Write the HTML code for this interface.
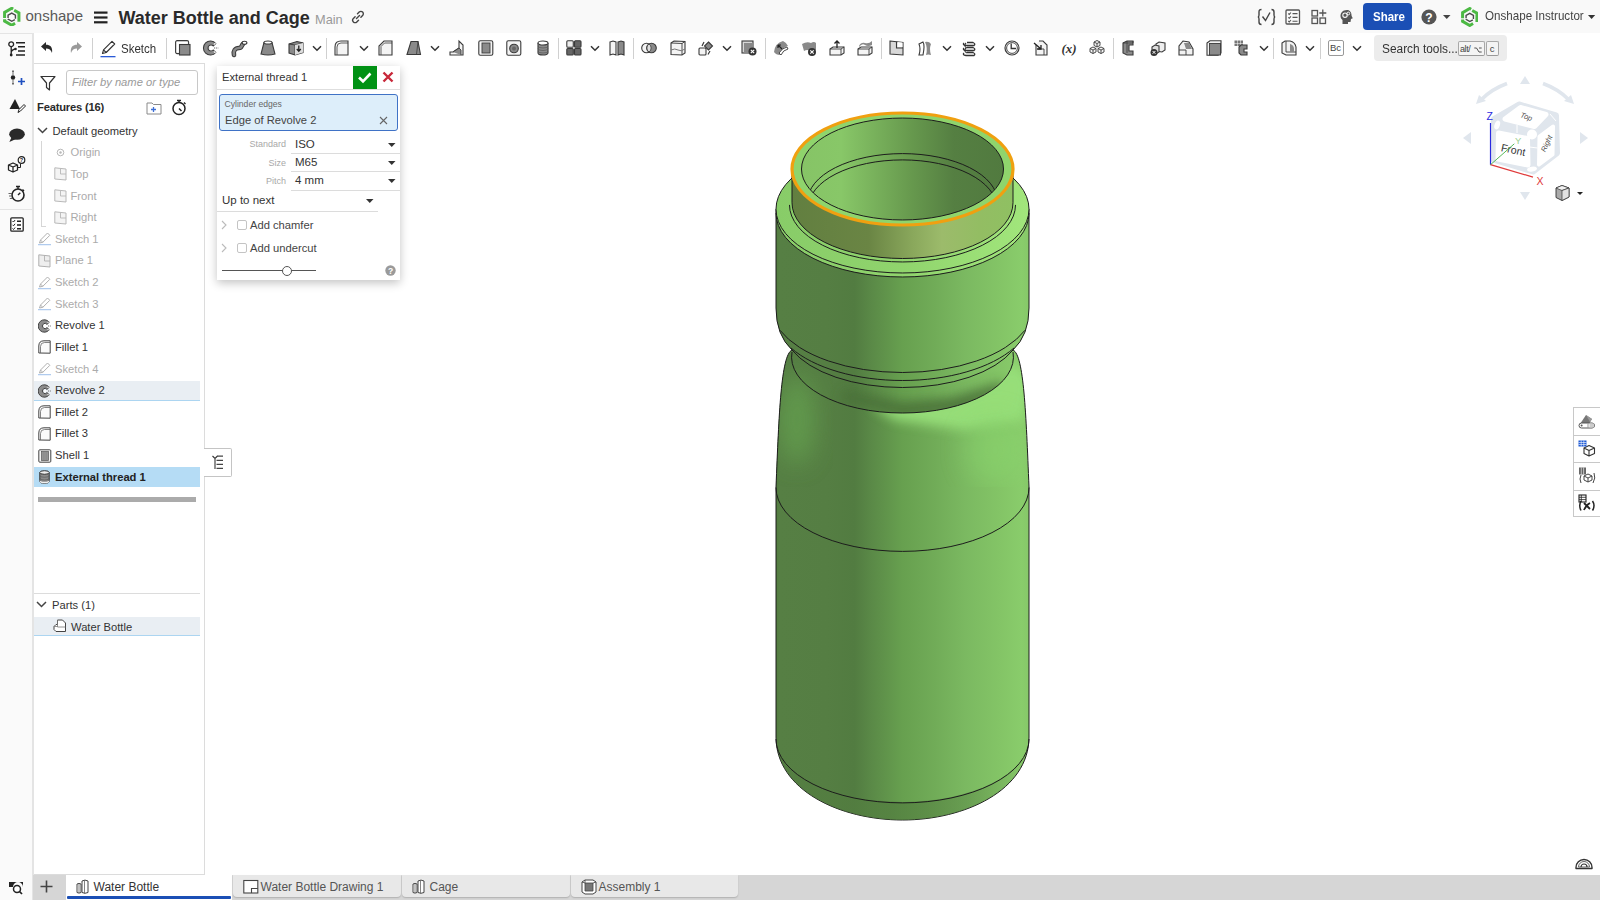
<!DOCTYPE html>
<html><head><meta charset="utf-8">
<style>
*{box-sizing:border-box;margin:0;padding:0}
html,body{width:1600px;height:900px;overflow:hidden;background:#fff;font-family:"Liberation Sans",sans-serif;color:#333}
.a{position:absolute}
#topbar{left:0;top:0;width:1600px;height:33px;background:#f9f9f9}
#leftcol{left:0;top:33px;width:34px;height:867px;background:#fafafa;border-right:2px solid #e4e4e4}
#toolbar{left:34px;top:33px;width:1566px;height:31px;background:#fff}
#panel{left:34px;top:63px;width:171px;height:812px;background:#fff;border-top:1px solid #dcdcdc;border-right:1px solid #dcdcdc;border-bottom:1px solid #dcdcdc}
#tabbar{left:33px;top:875px;width:1567px;height:25px;background:#d6d6d6}
.tab{position:absolute;top:0;height:25px;background:#e8e8e8;border-radius:0 0 5px 5px;font-size:12.5px;color:#555}
.frow{position:absolute;left:0;width:167px;height:21px;font-size:12px;line-height:21px;color:#333}
.frow.dim{color:#aaa}
.frow svg{position:absolute;top:4px;left:5px}
.frow span{position:absolute;left:22px}
</style></head>
<body>
<div id="topbar" class="a"></div>
<!--S:topbar-->
<svg class="a" style="left:3.3px;top:6.6px" width="17.5" height="19.5" viewBox="0 0 20 22">
<path d="M11.6,2.2 L10,1.3 L1.8,6 L1.8,12.4" fill="none" stroke="#4cb944" stroke-width="3.4"/>
<path d="M12.8,3.6 L18.2,6.6 L18.2,16.8" fill="none" stroke="#4cb944" stroke-width="3.4"/>
<path d="M1.8,13.8 L1.8,16 L10,20.7 L13.8,18.5" fill="none" stroke="#4cb944" stroke-width="3.4"/>
<path d="M10,6.8 L14.2,9.2 L14.2,13.8 L10,16.2 L5.8,13.8 L5.8,9.2 Z" fill="none" stroke="#4a4a4a" stroke-width="1.6" stroke-dasharray="9,1.2"/>
</svg>
<div class="a" style="left:25.5px;top:7.90px;font-size:15px;line-height:15px;color:#5a5a5a;white-space:nowrap;">onshape</div>
<svg class="a" style="left:94px;top:11px" width="14" height="13"><rect x="0" y="0.5" width="13.5" height="2.2" fill="#222"/><rect x="0" y="5.4" width="13.5" height="2.2" fill="#222"/><rect x="0" y="10.2" width="13.5" height="2.2" fill="#222"/></svg>
<div class="a" style="left:118.5px;top:8.76px;font-size:18px;line-height:18px;color:#2a2a2a;white-space:nowrap;font-weight:bold">Water Bottle and Cage</div>
<div class="a" style="left:315px;top:13.96px;font-size:12.8px;line-height:12.8px;color:#9a9a9a;white-space:nowrap;">Main</div>
<svg class="a" style="left:351px;top:10px" width="14" height="14" viewBox="0 0 14 14"><path d="M5.5,8.5 L8.5,5.5 M6.5,3.8 L8.2,2.1 a2.2,2.2 0 0 1 3.4,3.4 L9.9,7.2 M4.1,6.8 L2.4,8.5 a2.2,2.2 0 0 0 3.4,3.4 L7.5,10.2" fill="none" stroke="#444" stroke-width="1.4" stroke-linecap="round"/></svg>
<svg class="a" style="left:1257px;top:8px" width="19" height="18" viewBox="0 0 19 18"><path d="M4.5,1.5 Q2,1.5 2,4 V7 Q2,9 0.8,9 Q2,9 2,11 V14 Q2,16.5 4.5,16.5 M14.5,1.5 Q17,1.5 17,4 V7 Q17,9 18.2,9 Q17,9 17,11 V14 Q17,16.5 14.5,16.5" fill="none" stroke="#444" stroke-width="1.4"/><path d="M5.5,8.5 L8.5,12.5 L13,4.5" fill="none" stroke="#444" stroke-width="1.4"/></svg>
<svg class="a" style="left:1285px;top:9px" width="16" height="16" viewBox="0 0 16 16"><rect x="1" y="1" width="13.5" height="14" rx="1" fill="none" stroke="#555" stroke-width="1.3"/><path d="M3.3,4.5 l1,1 1.6,-2 M3.3,8.3 l1,1 1.6,-2 M3.3,12 l1,1 1.6,-2 M7.5,4.6h5 M7.5,8.4h5 M7.5,12.2h5" stroke="#555" stroke-width="1.1" fill="none"/></svg>
<svg class="a" style="left:1311px;top:8px" width="17" height="17" viewBox="0 0 17 17"><rect x="1" y="2.5" width="5.5" height="5.5" fill="none" stroke="#555" stroke-width="1.3"/><rect x="1" y="10" width="5.5" height="5.5" fill="none" stroke="#555" stroke-width="1.3"/><rect x="9" y="10" width="5.5" height="5.5" fill="none" stroke="#555" stroke-width="1.3"/><path d="M11.8,1.5v7 M8.3,5h7" stroke="#555" stroke-width="1.3"/></svg>
<svg class="a" style="left:1339px;top:9px" width="16" height="16" viewBox="0 0 16 16"><path d="M8,1 C3.5,1 1.5,4 1.5,7 C1.5,9 2.5,10 3.5,11 L3.5,15 L9,15 L9,13 L11.5,13 L12,10 L13.8,9.3 L12.6,7 C12.6,3.5 11,1 8,1 Z" fill="#555"/><circle cx="6" cy="6.2" r="2.2" fill="none" stroke="#f9f9f9" stroke-width="1.1"/><circle cx="9.3" cy="4.5" r="1.4" fill="none" stroke="#f9f9f9" stroke-width="1"/></svg>
<div class="a" style="left:1363.3px;top:2.6px;width:49px;height:27px;background:#1b4fb5;border-radius:4px"></div>
<div class="a" style="left:1373px;top:11.16px;font-size:12.8px;line-height:12.8px;color:#fff;white-space:nowrap;font-weight:bold;transform:scaleX(0.9);transform-origin:0 0">Share</div>
<svg class="a" style="left:1421px;top:9px" width="16" height="16" viewBox="0 0 16 16"><circle cx="8" cy="8" r="7.6" fill="#555"/><text x="8" y="12.6" font-size="12" font-weight="bold" fill="#fff" text-anchor="middle" font-family="Liberation Sans">?</text></svg>
<svg class="a" style="left:1443px;top:15px" width="8" height="5"><path d="M0,0 L7.5,0 L3.75,4 Z" fill="#444"/></svg>
<svg class="a" style="left:1460.8px;top:7.3px" width="17.5" height="20" viewBox="0 0 20 22">
<path d="M11.6,2.2 L10,1.3 L1.8,6 L1.8,12.4" fill="none" stroke="#4cb944" stroke-width="3.4"/>
<path d="M12.8,3.6 L18.2,6.6 L18.2,16.8" fill="none" stroke="#4cb944" stroke-width="3.4"/>
<path d="M1.8,13.8 L1.8,16 L10,20.7 L13.8,18.5" fill="none" stroke="#4cb944" stroke-width="3.4"/>
<path d="M10,6.8 L14.2,9.2 L14.2,13.8 L10,16.2 L5.8,13.8 L5.8,9.2 Z" fill="none" stroke="#4a4a4a" stroke-width="1.6" stroke-dasharray="9,1.2"/>
</svg>
<div class="a" style="left:1484.5px;top:10.18px;font-size:12.55px;line-height:12.55px;color:#444;white-space:nowrap;transform:scaleX(0.925);transform-origin:0 0">Onshape Instructor</div>
<svg class="a" style="left:1588px;top:14.5px" width="8" height="5"><path d="M0,0 L7.2,0 L3.6,4 Z" fill="#333"/></svg>
<!--E:topbar-->
<div id="leftcol" class="a"></div>
<!--S:leftcol-->
<svg class="a" style="left:8px;top:41px" width="18" height="16" viewBox="0 0 18 16" overflow="visible"><circle cx="3.2" cy="3.2" r="2.4" fill="none" stroke="#222" stroke-width="1.3"/><path d="M3.2,5.6 V14 M3.2,12 Q3.2,9 7,8.2" fill="none" stroke="#222" stroke-width="1.3"/><circle cx="3.2" cy="14" r="1.4" fill="#222"/><circle cx="7.5" cy="8" r="1.3" fill="#222"/><path d="M8,1.8 H17 M10,5.8 H17 M10,10 H17 M8,14 H17" stroke="#222" stroke-width="1.5"/></svg>
<svg class="a" style="left:9px;top:70px" width="17" height="16" viewBox="0 0 17 16" overflow="visible"><path d="M4,0.5 V2.5 M4,12.5 V14.5" stroke="#222" stroke-width="1.3"/><circle cx="4" cy="7.5" r="2.2" fill="#222"/><path d="M4,3.5 V4.5 M4,10.5 V11.5" stroke="#222" stroke-width="1.3"/><path d="M9,11.5 H16 M12.5,8 V15" stroke="#1f4fc0" stroke-width="1.7"/></svg>
<svg class="a" style="left:9px;top:98px" width="17" height="16" viewBox="0 0 17 16" overflow="visible"><path d="M0.5,11 L6,1 L11,11 Z" fill="#222"/><path d="M9,14.5 L10,11.5 L15,6.5 L16.5,8 L11.5,13 Z" fill="#fff" stroke="#222" stroke-width="1"/></svg>
<svg class="a" style="left:8px;top:128px" width="18" height="15" viewBox="0 0 18 15" overflow="visible"><ellipse cx="9" cy="6.2" rx="7.8" ry="5.6" fill="#2a2a2a"/><path d="M3.5,9.5 L1.3,14 L8,11" fill="#2a2a2a"/></svg>
<svg class="a" style="left:7px;top:156px" width="19" height="17" viewBox="0 0 19 17" overflow="visible"><path d="M1.5,9 L6,7 L10.5,9 V14 L6,16 L1.5,14 Z M1.5,9 L6,11 L10.5,9 M6,11 V16" fill="#fff" stroke="#222" stroke-width="1.3" stroke-linejoin="round"/><path d="M10.5,11.5 H13.5 V8" fill="none" stroke="#222" stroke-width="1"/><circle cx="14.5" cy="4" r="3.3" fill="#fff" stroke="#222" stroke-width="1.2"/><text x="14.5" y="6.2" font-size="5.5" font-weight="bold" text-anchor="middle" fill="#222" font-family="Liberation Sans">?</text></svg>
<svg class="a" style="left:8px;top:185px" width="17" height="17" viewBox="0 0 17 17" overflow="visible"><circle cx="10" cy="10" r="6" fill="none" stroke="#222" stroke-width="1.6"/><path d="M8,1.5 H12 M10,1.5 V4 M14.5,4.5 L16,6 M10,10 L12.3,7.7" stroke="#222" stroke-width="1.4"/><path d="M0.5,8.5 H4 M1,11 H3.5 M1.8,13.5 H4.5" stroke="#555" stroke-width="0.9"/></svg>
<div class="a" style="left:0;top:209px;width:32px;height:1px;background:#e4e4e4"></div>
<svg class="a" style="left:10px;top:217px" width="14" height="15" viewBox="0 0 14 15" overflow="visible"><rect x="0.8" y="0.8" width="12.4" height="13.4" rx="1" fill="#fff" stroke="#222" stroke-width="1.3"/><path d="M2.5,4 l1,1 1.6,-2 M2.5,7.8 l1,1 1.6,-2 M2.5,11.5 l1,1 1.6,-2" stroke="#222" stroke-width="1" fill="none"/><path d="M7,4.2 H11 M7,8 H11 M7,11.8 H11" stroke="#222" stroke-width="1.5"/></svg>
<svg class="a" style="left:8px;top:880px" width="16" height="15" viewBox="0 0 16 15" overflow="visible"><path d="M1,2 H15 V7 A5,5 0 0 0 5,7 H1 Z" fill="#222"/><circle cx="9" cy="9" r="3.5" fill="#fff" stroke="#222" stroke-width="1.5"/><path d="M11.5,11.5 L14,14" stroke="#222" stroke-width="1.7"/></svg>
<div class="a" style="left:0;top:33px;width:34px;height:1px;background:#e4e4e4"></div>
<!--E:leftcol-->
<!--S:toolbar-->
<div id="toolbar" class="a">
<div class="a" style="left:57.5px;top:5px;width:1px;height:21px;background:#d0d0d0"></div>
<div class="a" style="left:132.0px;top:5px;width:1px;height:21px;background:#d0d0d0"></div>
<svg class="a" style="left:140.5px;top:7px" width="16" height="16" viewBox="0 0 16 16" overflow="visible"><rect x="0.6" y="0.6" width="13" height="13" rx="1.5" fill="#f4f4f4" stroke="#3a3a3a" stroke-width="1.1"/><path d="M2,2 H12 V5 H5 V12 H2 Z" fill="#fff"/><rect x="4.5" y="4.5" width="10.5" height="10.5" fill="#8a8a8a" stroke="#3a3a3a" stroke-width="1.1"/></svg>
<svg class="a" style="left:169.0px;top:7px" width="16" height="16" viewBox="0 0 16 16" overflow="visible"><path d="M12.8,3.5 A7,7 0 1 0 12.8,12.5 L10.2,10 A3,3 0 1 1 10.2,6 Z" fill="#8a8a8a" stroke="#3a3a3a" stroke-width="1.1"/><path d="M5,8 h1.2 M11,8 h4.5" stroke="#3a3a3a" stroke-width="0.8" stroke-dasharray="1.2,0.9"/><circle cx="8" cy="8" r="1.2" fill="#fff"/><path d="M10.8,4.6 L12.5,3 M10.8,11.4 L12.5,13" stroke="#fff" stroke-width="1.1"/></svg>
<svg class="a" style="left:197.5px;top:7px" width="16" height="16" viewBox="0 0 16 16" overflow="visible"><path d="M2,15 C1,11 3,8 7,8 C10,8 9,6 11,4" fill="none" stroke="#3a3a3a" stroke-width="4.6" stroke-linecap="round"/><path d="M2,15 C1,11 3,8 7,8 C10,8 9,6 11,4" fill="none" stroke="#8a8a8a" stroke-width="2.6" stroke-linecap="round"/><ellipse cx="12.5" cy="2.8" rx="2.4" ry="1.6" fill="#fff" stroke="#3a3a3a" stroke-width="1.1"/></svg>
<svg class="a" style="left:225.5px;top:7px" width="16" height="16" viewBox="0 0 16 16" overflow="visible"><path d="M4,2.5 L1,14 Q8,16 15,14 L12,2.5 Z" fill="#8a8a8a" stroke="#3a3a3a" stroke-width="1.1"/><ellipse cx="8" cy="2.5" rx="4" ry="1.5" fill="#fff" stroke="#3a3a3a" stroke-width="1.1"/></svg>
<svg class="a" style="left:253.5px;top:7px" width="16" height="16" viewBox="0 0 16 16" overflow="visible"><path d="M1,4 L9,1.5 L15,3 L15,12.5 L7,15 L1,13 Z" fill="#8a8a8a" stroke="#3a3a3a" stroke-width="1.1"/><path d="M7,5 L15,3 M7,5 L7,15 M1,4 L7,5" fill="none" stroke="#3a3a3a" stroke-width="0.9"/><path d="M7,5 L15,3 L15,12.5 L7,15 Z" fill="#ddd"/><path d="M10.8,5.5 V11 M8.8,9 L10.8,11.2 L12.8,9" stroke="#222" stroke-width="1.3" fill="none"/></svg>
<svg class="a" style="left:277.5px;top:12px" width="10" height="7" viewBox="0 0 10 7"><path d="M1,1.2 L5,5.2 L9,1.2" fill="none" stroke="#333" stroke-width="1.5"/></svg>
<div class="a" style="left:292.0px;top:5px;width:1px;height:21px;background:#d0d0d0"></div>
<svg class="a" style="left:300.0px;top:7px" width="16" height="16" viewBox="0 0 16 16" overflow="visible"><path d="M1,15 V7 Q1,1 7,1 H14 V15 Z" fill="#f4f4f4" stroke="#3a3a3a" stroke-width="1.1"/><path d="M3,15 V7 Q3,3 7,3 H14" fill="none" stroke="#3a3a3a" stroke-width="0.8"/></svg>
<svg class="a" style="left:324.5px;top:12px" width="10" height="7" viewBox="0 0 10 7"><path d="M1,1.2 L5,5.2 L9,1.2" fill="none" stroke="#333" stroke-width="1.5"/></svg>
<svg class="a" style="left:344.0px;top:7px" width="16" height="16" viewBox="0 0 16 16" overflow="visible"><path d="M1,15 V6 L6,1 H14 V15 Z" fill="#f4f4f4" stroke="#3a3a3a" stroke-width="1.1"/><path d="M3,15 V6.5 L6.5,3 H14" fill="none" stroke="#3a3a3a" stroke-width="0.8"/></svg>
<svg class="a" style="left:372.0px;top:7px" width="16" height="16" viewBox="0 0 16 16" overflow="visible"><path d="M1,14.5 L5,1.5 H12 L14.5,14.5 Z" fill="#8a8a8a" stroke="#3a3a3a" stroke-width="1.1"/><path d="M12,1.5 L10.5,14.5" stroke="#3a3a3a" stroke-width="0.8"/></svg>
<svg class="a" style="left:396.0px;top:12px" width="10" height="7" viewBox="0 0 10 7"><path d="M1,1.2 L5,5.2 L9,1.2" fill="none" stroke="#333" stroke-width="1.5"/></svg>
<svg class="a" style="left:415.0px;top:7px" width="16" height="16" viewBox="0 0 16 16" overflow="visible"><path d="M1,12 L1,15 L14,15 L14,5 L10,1 L10,8 L4,12 Z" fill="#f4f4f4" stroke="#3a3a3a" stroke-width="1.1"/><path d="M4,12 L10,8 L12,10 L12,15" fill="#8a8a8a" stroke="#3a3a3a" stroke-width="0.9"/></svg>
<svg class="a" style="left:443.5px;top:7px" width="16" height="16" viewBox="0 0 16 16" overflow="visible"><rect x="0.8" y="0.8" width="14" height="14.4" rx="1.5" fill="#f4f4f4" stroke="#3a3a3a" stroke-width="1.1"/><rect x="4" y="3" width="8" height="10" fill="#8a8a8a" stroke="#3a3a3a" stroke-width="0.9"/></svg>
<svg class="a" style="left:472.0px;top:7px" width="16" height="16" viewBox="0 0 16 16" overflow="visible"><rect x="0.8" y="0.8" width="14" height="14.4" rx="1.5" fill="#f4f4f4" stroke="#3a3a3a" stroke-width="1.1"/><circle cx="8" cy="8.5" r="4.3" fill="#8a8a8a" stroke="#3a3a3a" stroke-width="1.1"/><circle cx="8" cy="8.5" r="2" fill="#666"/></svg>
<svg class="a" style="left:500.5px;top:7px" width="16" height="16" viewBox="0 0 16 16" overflow="visible"><path d="M3,3 V13 A5,2 0 0 0 13,13 V3" fill="#8a8a8a" stroke="#3a3a3a" stroke-width="1.1"/><ellipse cx="8" cy="3" rx="5" ry="2" fill="#fff" stroke="#3a3a3a" stroke-width="1.1"/><path d="M3,6 A5,2 0 0 0 13,6 M3,8.5 A5,2 0 0 0 13,8.5 M3,11 A5,2 0 0 0 13,11" fill="none" stroke="#555" stroke-width="0.7"/></svg>
<div class="a" style="left:523.5px;top:5px;width:1px;height:21px;background:#d0d0d0"></div>
<svg class="a" style="left:532.0px;top:7px" width="16" height="16" viewBox="0 0 16 16" overflow="visible"><rect x="0.8" y="0.8" width="6.5" height="6.5" rx="1" fill="#eee" stroke="#3a3a3a" stroke-width="1.1"/><rect x="8.5" y="0.8" width="6.5" height="6.5" rx="1" fill="#666" stroke="#3a3a3a" stroke-width="1.1"/><rect x="0.8" y="8.5" width="6.5" height="6.5" rx="1" fill="#666" stroke="#3a3a3a" stroke-width="1.1"/><rect x="8.5" y="8.5" width="6.5" height="6.5" rx="1" fill="#666" stroke="#3a3a3a" stroke-width="1.1"/></svg>
<svg class="a" style="left:556.0px;top:12px" width="10" height="7" viewBox="0 0 10 7"><path d="M1,1.2 L5,5.2 L9,1.2" fill="none" stroke="#333" stroke-width="1.5"/></svg>
<svg class="a" style="left:575.0px;top:7px" width="16" height="16" viewBox="0 0 16 16" overflow="visible"><path d="M1,2 L4,1 L7,2 V15 L4,14 L1,15 Z" fill="#f4f4f4" stroke="#3a3a3a" stroke-width="1.1"/><path d="M9,2 L12,1 L15,2 V15 L12,14 L9,15 Z" fill="#8a8a8a" stroke="#3a3a3a" stroke-width="1.1"/></svg>
<div class="a" style="left:598.5px;top:5px;width:1px;height:21px;background:#d0d0d0"></div>
<svg class="a" style="left:607.0px;top:7px" width="16" height="16" viewBox="0 0 16 16" overflow="visible"><circle cx="5.5" cy="8" r="4.8" fill="#f4f4f4" stroke="#3a3a3a" stroke-width="1.1"/><circle cx="10.5" cy="8" r="4.8" fill="#8a8a8a" stroke="#3a3a3a" stroke-width="1.1"/><path d="M8,4 A4.8,4.8 0 0 1 8,12 A4.8,4.8 0 0 1 8,4Z" fill="#ddd" stroke="#3a3a3a" stroke-width="0.8"/></svg>
<svg class="a" style="left:635.5px;top:7px" width="16" height="16" viewBox="0 0 16 16" overflow="visible"><path d="M1,3 L4,1 L15,1.5 V13 L12,15 L1,14.5 Z" fill="#f4f4f4" stroke="#3a3a3a" stroke-width="1.1"/><path d="M1,3 L12,3.5 L15,1.5 M12,3.5 V15" fill="none" stroke="#3a3a3a" stroke-width="0.9"/><path d="M1,10 Q5,8 8,10 T15,9" fill="none" stroke="#777" stroke-width="1"/></svg>
<svg class="a" style="left:663.5px;top:7px" width="16" height="16" viewBox="0 0 16 16" overflow="visible"><rect x="1" y="8" width="7" height="7" rx="1" fill="#f4f4f4" stroke="#3a3a3a" stroke-width="1.1"/><path d="M10.5,2 L14.5,6 L10.5,10 L6.5,6 Z" fill="#8a8a8a" stroke="#3a3a3a" stroke-width="1.1"/><path d="M4,6 L6,2 M12,11 L10,14.5" stroke="#3a3a3a" stroke-width="1.2"/></svg>
<svg class="a" style="left:687.5px;top:12px" width="10" height="7" viewBox="0 0 10 7"><path d="M1,1.2 L5,5.2 L9,1.2" fill="none" stroke="#333" stroke-width="1.5"/></svg>
<svg class="a" style="left:707.0px;top:7px" width="16" height="16" viewBox="0 0 16 16" overflow="visible"><rect x="1" y="1" width="11" height="12" fill="#d8d8d8" stroke="#3a3a3a" stroke-width="1.1"/><rect x="3" y="3" width="9" height="10" fill="#8a8a8a"/><circle cx="11.5" cy="11.5" r="4" fill="#333"/><path d="M9.8,9.8 l3.4,3.4 m0,-3.4 l-3.4,3.4" stroke="#fff" stroke-width="1.1"/></svg>
<div class="a" style="left:730.5px;top:5px;width:1px;height:21px;background:#d0d0d0"></div>
<svg class="a" style="left:739.0px;top:7px" width="16" height="16" viewBox="0 0 16 16" overflow="visible"><path d="M1,12 Q2,3 10,1 Q14,3 15,6 Q9,7 7,15 Q3,15 1,12Z" fill="#8a8a8a"/><path d="M6,13 Q9,8 14,7 L15,9 Q10,10 8,15Z" fill="#fff" stroke="#3a3a3a" stroke-width="0.9"/><path d="M5,5 L9,9 M5,5 h3 M5,5 v3" stroke="#222" stroke-width="1.2" fill="none"/></svg>
<svg class="a" style="left:767.0px;top:7px" width="16" height="16" viewBox="0 0 16 16" overflow="visible"><path d="M1,4 Q6,1 10,3 Q13,1 15,3 V10 Q12,9 10,11 Q6,9 3,11 Z" fill="#8a8a8a"/><circle cx="11" cy="12" r="4" fill="#333"/><path d="M9.3,10.3 l3.4,3.4 m0,-3.4 l-3.4,3.4" stroke="#fff" stroke-width="1.1"/></svg>
<svg class="a" style="left:795.0px;top:7px" width="16" height="16" viewBox="0 0 16 16" overflow="visible"><path d="M1,9 L4,7 H15 V13 L12,15 H1 Z" fill="#f4f4f4" stroke="#3a3a3a" stroke-width="1.1"/><path d="M1,9 H12 L15,7 M12,9 V15" fill="none" stroke="#3a3a3a" stroke-width="0.9"/><path d="M8,1 V8 M5.5,3.5 L8,1 L10.5,3.5" stroke="#222" stroke-width="1.3" fill="none"/></svg>
<svg class="a" style="left:823.0px;top:7px" width="16" height="16" viewBox="0 0 16 16" overflow="visible"><path d="M1,9 L4,7 H15 V13 L12,15 H1 Z" fill="#f4f4f4" stroke="#3a3a3a" stroke-width="1.1"/><path d="M1,9 H12 L15,7 M12,9 V15" fill="none" stroke="#3a3a3a" stroke-width="0.9"/><path d="M2,6 Q4,2 8,3 T15,1 V5 Q11,7 8,5 T2,7Z" fill="#8a8a8a"/></svg>
<div class="a" style="left:846.5px;top:5px;width:1px;height:21px;background:#d0d0d0"></div>
<svg class="a" style="left:855.0px;top:7px" width="16" height="16" viewBox="0 0 16 16" overflow="visible"><path d="M1,1 L14,2.5 V15 L1,14 Z" fill="#d8d8d8" stroke="#3a3a3a" stroke-width="1.1"/><path d="M7.5,1.8 V8 H14" fill="none" stroke="#3a3a3a" stroke-width="1.1"/><path d="M8.5,2 V7 H13.5 V2.5Z" fill="#fff"/></svg>
<svg class="a" style="left:883.0px;top:7px" width="16" height="16" viewBox="0 0 16 16" overflow="visible"><path d="M2,4 L6,2 Q8,5 6,15 L2,15 Q4,9 2,4Z" fill="#fff" stroke="#3a3a3a" stroke-width="1.1"/><path d="M8,2 Q12,1 14,4 Q12,9 14,15 Q11,14 9,15 Q11,8 8,2Z" fill="#8a8a8a"/></svg>
<svg class="a" style="left:907.5px;top:12px" width="10" height="7" viewBox="0 0 10 7"><path d="M1,1.2 L5,5.2 L9,1.2" fill="none" stroke="#333" stroke-width="1.5"/></svg>
<svg class="a" style="left:927.0px;top:7px" width="16" height="16" viewBox="0 0 16 16" overflow="visible"><path d="M3,3 Q1,5 5,5.5 H13 Q15,4 12,2.5 H6 M3,8 Q1,10 5,10.5 H13 Q15,9 12,7.5 H6 M3,13 Q1,15 5,15.5 H13 Q15,14 12,12.5 H6" fill="none" stroke="#333" stroke-width="1.3"/><path d="M5,3 Q2,6 6,8 M5,8 Q2,11 6,13" fill="none" stroke="#333" stroke-width="1.1"/></svg>
<svg class="a" style="left:951.0px;top:12px" width="10" height="7" viewBox="0 0 10 7"><path d="M1,1.2 L5,5.2 L9,1.2" fill="none" stroke="#333" stroke-width="1.5"/></svg>
<svg class="a" style="left:970.0px;top:7px" width="16" height="16" viewBox="0 0 16 16" overflow="visible"><circle cx="8" cy="8" r="7" fill="none" stroke="#3a3a3a" stroke-width="1.2"/><circle cx="8" cy="8" r="5.4" fill="none" stroke="#3a3a3a" stroke-width="0.9"/><path d="M7.2,3.5 V8.5 H12" fill="none" stroke="#333" stroke-width="1.3"/></svg>
<svg class="a" style="left:998.0px;top:7px" width="16" height="16" viewBox="0 0 16 16" overflow="visible"><path d="M4,5 V15 H15 V5 L11,1 H7" fill="#f4f4f4" stroke="#3a3a3a" stroke-width="1.1"/><path d="M6,9 H12 V15" fill="none" stroke="#3a3a3a" stroke-width="0.9"/><path d="M2,3 L9,9 M5,9 H9 V5" stroke="#222" stroke-width="1.3" fill="none"/></svg>
<svg class="a" style="left:1026.5px;top:7px" width="16" height="16" viewBox="0 0 16 16" overflow="visible"><text x="8" y="12.5" font-family="Liberation Serif" font-size="13" font-style="italic" font-weight="bold" text-anchor="middle" fill="#333">(x)</text></svg>
<svg class="a" style="left:1055.0px;top:7px" width="16" height="16" viewBox="0 0 16 16" overflow="visible"><g fill="#f4f4f4" stroke="#3a3a3a" stroke-width="0.9" stroke-linejoin="round"><path d="M5,2.0 L8,0.5 L11,2.0 V5.5 L8,7.0 L5,5.5 Z M5,2.0 L8,3.5 L11,2.0 M8,3.5 V7.0"/><path d="M1,8.5 L4,7 L7,8.5 V12 L4,13.5 L1,12 Z M1,8.5 L4,10 L7,8.5 M4,10 V13.5"/><path d="M9,8.5 L12,7 L15,8.5 V12 L12,13.5 L9,12 Z M9,8.5 L12,10 L15,8.5 M12,10 V13.5"/></g></svg>
<div class="a" style="left:1079.0px;top:5px;width:1px;height:21px;background:#d0d0d0"></div>
<svg class="a" style="left:1087.0px;top:7px" width="16" height="16" viewBox="0 0 16 16" overflow="visible"><path d="M2,3 L6,1 H12 V5 H8 V11 H12 V15 H6 L2,13Z" fill="#8a8a8a" stroke="#3a3a3a" stroke-width="1.1"/><path d="M2,3 H6 V13" fill="none" stroke="#3a3a3a" stroke-width="0.8"/><path d="M6,1 V3 M6,3 H12 V1" fill="none" stroke="#3a3a3a" stroke-width="0.8"/></svg>
<svg class="a" style="left:1115.5px;top:7px" width="16" height="16" viewBox="0 0 16 16" overflow="visible"><path d="M6,4 L9,2 L15,3 V10 L12,12 L6,11Z" fill="#eee" stroke="#3a3a3a" stroke-width="1.1"/><path d="M2,7 L5,5 L9,6 V12 L6,14 L2,13Z" fill="#ddd" stroke="#3a3a3a" stroke-width="1.1"/><circle cx="4" cy="12.5" r="3.5" fill="#333"/><path d="M2.6,11 l2.8,2.8 m0,-2.8 l-2.8,2.8" stroke="#fff" stroke-width="1"/></svg>
<svg class="a" style="left:1143.5px;top:7px" width="16" height="16" viewBox="0 0 16 16" overflow="visible"><path d="M1,15 V6 L5,1 L11,2 L15,9 V15Z" fill="#f2f2f2" stroke="#3a3a3a" stroke-width="1.1"/><path d="M6,3 L11,3 L14,9 H8Z" fill="#8a8a8a"/><path d="M1,10 H8 V15" fill="none" stroke="#3a3a3a" stroke-width="0.9"/></svg>
<svg class="a" style="left:1171.5px;top:7px" width="16" height="16" viewBox="0 0 16 16" overflow="visible"><path d="M1,3 L4,0.8 H15 V13 L12,15.2 H1Z" fill="#f2f2f2" stroke="#3a3a3a" stroke-width="1.1"/><rect x="3.5" y="3.5" width="11" height="11.5" fill="#8a8a8a" stroke="#3a3a3a" stroke-width="0.9"/></svg>
<svg class="a" style="left:1199.5px;top:7px" width="16" height="16" viewBox="0 0 16 16" overflow="visible"><g fill="#777"><rect x="0.5" y="0.5" width="2.5" height="2.5"/><rect x="3.5" y="0.5" width="2.5" height="2.5"/><rect x="6.5" y="0.5" width="2.5" height="2.5"/><rect x="0.5" y="3.5" width="2.5" height="2.5"/><rect x="3.5" y="3.5" width="2.5" height="2.5"/><rect x="6.5" y="3.5" width="2.5" height="2.5"/></g><path d="M5,7 L7,5 H13 V9 H10 V12 H13 V15 H7 L5,13Z" fill="#8a8a8a" stroke="#3a3a3a" stroke-width="1.1"/></svg>
<svg class="a" style="left:1224.5px;top:12px" width="10" height="7" viewBox="0 0 10 7"><path d="M1,1.2 L5,5.2 L9,1.2" fill="none" stroke="#333" stroke-width="1.5"/></svg>
<div class="a" style="left:1239.0px;top:5px;width:1px;height:21px;background:#d0d0d0"></div>
<svg class="a" style="left:1247.0px;top:7px" width="16" height="16" viewBox="0 0 16 16" overflow="visible"><path d="M1,3 L4,1 H9 Q14,2 15,7 V15 H5 L1,13Z" fill="#f2f2f2" stroke="#3a3a3a" stroke-width="1.1"/><path d="M5,1 V12 H15" fill="none" stroke="#3a3a3a" stroke-width="0.9"/><path d="M9,4 Q13,5 13,9 V12 H9Z" fill="#8a8a8a"/></svg>
<svg class="a" style="left:1271.0px;top:12px" width="10" height="7" viewBox="0 0 10 7"><path d="M1,1.2 L5,5.2 L9,1.2" fill="none" stroke="#333" stroke-width="1.5"/></svg>
<div class="a" style="left:1285.5px;top:5px;width:1px;height:21px;background:#d0d0d0"></div>
<div class="a" style="left:1293.5px;top:7px;width:16px;height:16px;border:1px solid #999;border-radius:2px;font-size:9.5px;line-height:14px;text-align:center;color:#444">Bc</div>
<svg class="a" style="left:1317.5px;top:12px" width="10" height="7" viewBox="0 0 10 7"><path d="M1,1.2 L5,5.2 L9,1.2" fill="none" stroke="#333" stroke-width="1.5"/></svg>
<svg class="a" style="left:6px;top:8px" width="14" height="14" viewBox="0 0 14 14"><path d="M1,5.5 L6,1 V3.8 C10,3.8 13,6 12,12 C11,8.5 9,7.4 6,7.4 V10 Z" fill="#2a2a2a"/></svg>
<svg class="a" style="left:35px;top:8px" width="14" height="14" viewBox="0 0 14 14"><path d="M13,5.5 L8,1 V3.8 C4,3.8 1,6 2,12 C3,8.5 5,7.4 8,7.4 V10 Z" fill="#9a9a9a"/></svg>
<svg class="a" style="left:66px;top:6px" width="17" height="20" viewBox="0 0 17 20"><path d="M2.5,14.5 L3.5,10.8 L12,2.3 L14.7,5 L6.2,13.5 Z M3.5,10.8 L6.2,13.5" fill="none" stroke="#333" stroke-width="1.1" stroke-linejoin="round"/><rect x="0.5" y="17" width="15" height="1.3" fill="#2a5bd7"/></svg>
<div class="a" style="left:86.5px;top:10px;font-size:12.8px;line-height:12.6px;color:#333;transform:scaleX(0.9);transform-origin:0 0">Sketch</div>
<div class="a" style="left:1340px;top:2px;width:133px;height:26px;background:#ececec;border-radius:4px"></div>
<div class="a" style="left:1348px;top:9px;font-size:12.5px;color:#333;transform:scaleX(0.95);transform-origin:0 0">Search tools...</div>
<div class="a" style="left:1423.5px;top:8px;width:27px;height:15px;border:1px solid #a8a8a8;border-bottom:1.5px solid #999;border-radius:2px;background:#f4f4f4;font-size:9px;line-height:13px;text-align:center;color:#444;letter-spacing:-0.4px;overflow:hidden"><span style="position:absolute;left:1.5px;top:0.8px">alt/</span><svg style="position:absolute;left:15.5px;top:4.5px" width="8" height="6" viewBox="0 0 8 6"><path d="M0.3,1 H2.5 L5,5 H7.7 M5,1 H7.7" fill="none" stroke="#444" stroke-width="0.9"/></svg></div>
<div class="a" style="left:1451.7px;top:8px;width:13px;height:15px;border:1px solid #a8a8a8;border-bottom:1.5px solid #999;border-radius:2px;background:#f4f4f4;font-size:9.5px;line-height:13px;text-align:center;color:#444">c</div>
</div>
<!--E:toolbar-->
<div id="panel" class="a"></div>
<!--S:panel-->
<svg class="a" style="left:40px;top:75px" width="16" height="16" viewBox="0 0 16 16"><path d="M1,1.5 H15 L9.5,8 V15 L6.5,12.5 V8 Z" fill="none" stroke="#333" stroke-width="1.2" stroke-linejoin="round"/></svg>
<div class="a" style="left:66px;top:70px;width:132px;height:25px;border:1px solid #c8c8c8;border-radius:3px;background:#fff"></div>
<div class="a" style="left:72px;top:77.02px;font-size:11.2px;line-height:11.2px;color:#9a9a9a;white-space:nowrap;font-style:italic">Filter by name or type</div>
<div class="a" style="left:37px;top:102.22px;font-size:11.2px;line-height:11.2px;color:#2b2b2b;white-space:nowrap;font-weight:bold;letter-spacing:-0.2px">Features (16)</div>
<svg class="a" style="left:146px;top:101px" width="16" height="14" viewBox="0 0 16 14"><path d="M1,2 H6 L7.5,3.5 H15 V13 H1 Z" fill="none" stroke="#8a8a8a" stroke-width="1"/><path d="M5,8.5 h5 M7.5,6 v5" stroke="#3d6fd6" stroke-width="1.3"/></svg>
<svg class="a" style="left:171px;top:99px" width="16" height="17" viewBox="0 0 16 17"><circle cx="8" cy="9.5" r="6" fill="none" stroke="#222" stroke-width="1.5"/><path d="M6,1.5 h4 M8,1.5 v2 M8,9.5 L10.5,12" stroke="#222" stroke-width="1.5"/><path d="M13,3.5 l1.5,1.5" stroke="#222" stroke-width="1.3"/></svg>
<svg class="a" style="left:37px;top:127px" width="11" height="7" viewBox="0 0 11 7"><path d="M1,1 L5.5,5.5 L10,1" fill="none" stroke="#444" stroke-width="1.5"/></svg>
<div class="a" style="left:52.5px;top:125.72px;font-size:11.2px;line-height:11.2px;color:#333;white-space:nowrap;">Default geometry</div>
<div class="a" style="left:41px;top:141px;width:1px;height:86px;background:#d6d6d6"></div><div class="a" style="left:41px;top:226px;width:5px;height:1px;background:#d6d6d6"></div>
<svg class="a" style="left:56px;top:148px" width="9" height="9" viewBox="0 0 9 9"><circle cx="4.5" cy="4.5" r="3.3" fill="none" stroke="#b8b8b8" stroke-width="1"/><circle cx="4.5" cy="4.5" r="1.2" fill="#b8b8b8"/></svg>
<div class="a" style="left:70.5px;top:147.34px;font-size:11.2px;line-height:11.2px;color:#ababab;white-space:nowrap;">Origin</div>
<svg class="a" style="left:54px;top:167.4px" width="14" height="14" viewBox="0 0 14 14"><path d="M0.8,0.8 L12,2 V13 L0.8,12 Z" fill="#f4f4f4" stroke="#b8b8b8" stroke-width="1"/><path d="M6.5,1.5 V7 H12" fill="none" stroke="#b8b8b8" stroke-width="0.9"/></svg>
<div class="a" style="left:70.5px;top:168.96px;font-size:11.2px;line-height:11.2px;color:#ababab;white-space:nowrap;">Top</div>
<svg class="a" style="left:54px;top:189.1px" width="14" height="14" viewBox="0 0 14 14"><path d="M0.8,0.8 L12,2 V13 L0.8,12 Z" fill="#f4f4f4" stroke="#b8b8b8" stroke-width="1"/><path d="M6.5,1.5 V7 H12" fill="none" stroke="#b8b8b8" stroke-width="0.9"/></svg>
<div class="a" style="left:70.5px;top:190.58px;font-size:11.2px;line-height:11.2px;color:#ababab;white-space:nowrap;">Front</div>
<svg class="a" style="left:54px;top:210.7px" width="14" height="14" viewBox="0 0 14 14"><path d="M0.8,0.8 L12,2 V13 L0.8,12 Z" fill="#f4f4f4" stroke="#b8b8b8" stroke-width="1"/><path d="M6.5,1.5 V7 H12" fill="none" stroke="#b8b8b8" stroke-width="0.9"/></svg>
<div class="a" style="left:70.5px;top:212.20px;font-size:11.2px;line-height:11.2px;color:#ababab;white-space:nowrap;">Right</div>
<div class="a" style="left:34px;top:380.8px;width:166px;height:20px;background:#e9eef3;border-bottom:1.5px solid #acd5f1"></div>
<div class="a" style="left:34px;top:467.3px;width:166px;height:19.8px;background:#b5dcf5"></div>
<svg class="a" style="left:38px;top:232.3px" width="14" height="14" viewBox="0 0 14 14"><path d="M1.5,11 L2.5,8 L9.5,1 L11.8,3.3 L4.8,10.3 Z M2.5,8 L4.8,10.3" fill="none" stroke="#b0b0b0" stroke-width="1" stroke-linejoin="round"/><rect x="0" y="12.2" width="13" height="1" fill="#9dbfea"/></svg>
<div class="a" style="left:55px;top:233.82px;font-size:11.2px;line-height:11.2px;color:#ababab;white-space:nowrap;">Sketch 1</div>
<svg class="a" style="left:38px;top:253.9px" width="14" height="14" viewBox="0 0 14 14"><path d="M0.8,0.8 L12,2 V13 L0.8,12 Z" fill="#eee" stroke="#b0b0b0" stroke-width="1"/><path d="M6.5,1.5 V7 H12" fill="none" stroke="#b0b0b0" stroke-width="0.9"/></svg>
<div class="a" style="left:55px;top:255.44px;font-size:11.2px;line-height:11.2px;color:#ababab;white-space:nowrap;">Plane 1</div>
<svg class="a" style="left:38px;top:275.5px" width="14" height="14" viewBox="0 0 14 14"><path d="M1.5,11 L2.5,8 L9.5,1 L11.8,3.3 L4.8,10.3 Z M2.5,8 L4.8,10.3" fill="none" stroke="#b0b0b0" stroke-width="1" stroke-linejoin="round"/><rect x="0" y="12.2" width="13" height="1" fill="#9dbfea"/></svg>
<div class="a" style="left:55px;top:277.06px;font-size:11.2px;line-height:11.2px;color:#ababab;white-space:nowrap;">Sketch 2</div>
<svg class="a" style="left:38px;top:297.2px" width="14" height="14" viewBox="0 0 14 14"><path d="M1.5,11 L2.5,8 L9.5,1 L11.8,3.3 L4.8,10.3 Z M2.5,8 L4.8,10.3" fill="none" stroke="#b0b0b0" stroke-width="1" stroke-linejoin="round"/><rect x="0" y="12.2" width="13" height="1" fill="#9dbfea"/></svg>
<div class="a" style="left:55px;top:298.68px;font-size:11.2px;line-height:11.2px;color:#ababab;white-space:nowrap;">Sketch 3</div>
<svg class="a" style="left:38px;top:318.8px" width="14" height="14" viewBox="0 0 14 14"><path d="M11.3,3.2 A6.2,6.2 0 1 0 11.3,10.8 L9,8.6 A2.6,2.6 0 1 1 9,5.4 Z" fill="#8c8c8c" stroke="#444" stroke-width="1"/><path d="M4.3,7 h1.2 M10,7 h3.5" stroke="#444" stroke-width="0.8" stroke-dasharray="1,0.8"/><circle cx="7" cy="7" r="1.1" fill="#fff"/><path d="M9.5,4 L11,2.5 M9.5,10 L11,11.5" stroke="#fff" stroke-width="1"/></svg>
<div class="a" style="left:55px;top:320.30px;font-size:11.2px;line-height:11.2px;color:#333;white-space:nowrap;">Revolve 1</div>
<svg class="a" style="left:38px;top:340.4px" width="14" height="14" viewBox="0 0 14 14"><path d="M0.8,13 V6 Q0.8,0.8 6,0.8 H12.2 V13.2 Z" fill="#fafafa" stroke="#444" stroke-width="1"/><path d="M2.5,13 V6.5 Q2.5,2.5 6.5,2.5 H12" fill="none" stroke="#666" stroke-width="0.8"/></svg>
<div class="a" style="left:55px;top:341.92px;font-size:11.2px;line-height:11.2px;color:#333;white-space:nowrap;">Fillet 1</div>
<svg class="a" style="left:38px;top:362.0px" width="14" height="14" viewBox="0 0 14 14"><path d="M1.5,11 L2.5,8 L9.5,1 L11.8,3.3 L4.8,10.3 Z M2.5,8 L4.8,10.3" fill="none" stroke="#b0b0b0" stroke-width="1" stroke-linejoin="round"/><rect x="0" y="12.2" width="13" height="1" fill="#9dbfea"/></svg>
<div class="a" style="left:55px;top:363.54px;font-size:11.2px;line-height:11.2px;color:#ababab;white-space:nowrap;">Sketch 4</div>
<svg class="a" style="left:38px;top:383.6px" width="14" height="14" viewBox="0 0 14 14"><path d="M11.3,3.2 A6.2,6.2 0 1 0 11.3,10.8 L9,8.6 A2.6,2.6 0 1 1 9,5.4 Z" fill="#8c8c8c" stroke="#444" stroke-width="1"/><path d="M4.3,7 h1.2 M10,7 h3.5" stroke="#444" stroke-width="0.8" stroke-dasharray="1,0.8"/><circle cx="7" cy="7" r="1.1" fill="#fff"/><path d="M9.5,4 L11,2.5 M9.5,10 L11,11.5" stroke="#fff" stroke-width="1"/></svg>
<div class="a" style="left:55px;top:385.16px;font-size:11.2px;line-height:11.2px;color:#333;white-space:nowrap;">Revolve 2</div>
<svg class="a" style="left:38px;top:405.3px" width="14" height="14" viewBox="0 0 14 14"><path d="M0.8,13 V6 Q0.8,0.8 6,0.8 H12.2 V13.2 Z" fill="#fafafa" stroke="#444" stroke-width="1"/><path d="M2.5,13 V6.5 Q2.5,2.5 6.5,2.5 H12" fill="none" stroke="#666" stroke-width="0.8"/></svg>
<div class="a" style="left:55px;top:406.78px;font-size:11.2px;line-height:11.2px;color:#333;white-space:nowrap;">Fillet 2</div>
<svg class="a" style="left:38px;top:426.9px" width="14" height="14" viewBox="0 0 14 14"><path d="M0.8,13 V6 Q0.8,0.8 6,0.8 H12.2 V13.2 Z" fill="#fafafa" stroke="#444" stroke-width="1"/><path d="M2.5,13 V6.5 Q2.5,2.5 6.5,2.5 H12" fill="none" stroke="#666" stroke-width="0.8"/></svg>
<div class="a" style="left:55px;top:428.40px;font-size:11.2px;line-height:11.2px;color:#333;white-space:nowrap;">Fillet 3</div>
<svg class="a" style="left:38px;top:448.5px" width="14" height="14" viewBox="0 0 14 14"><rect x="0.8" y="0.8" width="12" height="12.4" rx="1" fill="#f4f4f4" stroke="#444" stroke-width="1"/><rect x="3.5" y="2.5" width="7" height="9" fill="#999" stroke="#555" stroke-width="0.7"/><path d="M5.2,3 V11 M7,3 V11 M8.8,3 V11" stroke="#777" stroke-width="0.5"/></svg>
<div class="a" style="left:55px;top:450.02px;font-size:11.2px;line-height:11.2px;color:#333;white-space:nowrap;">Shell 1</div>
<svg class="a" style="left:38px;top:470.1px" width="14" height="14" viewBox="0 0 14 14"><path d="M1.8,2.5 V11.5 A4.7,1.8 0 0 0 11.2,11.5 V2.5" fill="#8a8a8a" stroke="#333" stroke-width="1"/><ellipse cx="6.5" cy="2.5" rx="4.7" ry="1.8" fill="#eee" stroke="#333" stroke-width="1"/><path d="M1.8,5.5 A4.7,1.8 0 0 0 11.2,5.5 M1.8,8.2 A4.7,1.8 0 0 0 11.2,8.2" fill="none" stroke="#555" stroke-width="0.6"/><path d="M1.8,10 A4.7,1.8 0 0 0 11.2,10 V11.5 A4.7,1.8 0 0 1 1.8,11.5Z" fill="#f0f0f0"/></svg>
<div class="a" style="left:55px;top:471.64px;font-size:11.2px;line-height:11.2px;color:#222;white-space:nowrap;font-weight:bold">External thread 1</div>
<div class="a" style="left:38px;top:497px;width:158px;height:5px;background:#ababab"></div>
<div class="a" style="left:34px;top:593px;width:166px;height:1px;background:#dcdcdc"></div>
<svg class="a" style="left:36px;top:601px" width="11" height="7" viewBox="0 0 11 7"><path d="M1,1 L5.5,5.5 L10,1" fill="none" stroke="#444" stroke-width="1.5"/></svg>
<div class="a" style="left:52px;top:600.02px;font-size:11.2px;line-height:11.2px;color:#333;white-space:nowrap;">Parts (1)</div>
<div class="a" style="left:34px;top:617px;width:166px;height:19px;background:#e9eef3;border-bottom:1.5px solid #acd5f1"></div>
<svg class="a" style="left:53px;top:619px" width="14" height="14" viewBox="0 0 14 14"><path d="M4.5,1 H9.5 L12.5,4 V12.5 H3 L1,10.5 V7.5 L3,5.5 H4.5 Z" fill="#fff" stroke="#444" stroke-width="1"/><path d="M4.5,1 V8 H12.5 M1,7.5 H4.5" fill="none" stroke="#777" stroke-width="0.8"/></svg>
<div class="a" style="left:71px;top:621.52px;font-size:11.2px;line-height:11.2px;color:#333;white-space:nowrap;">Water Bottle</div>
<!--E:panel-->
<div id="tabbar" class="a"></div>
<!--S:tabs-->
<svg class="a" style="left:40px;top:880px" width="13" height="13" viewBox="0 0 13 13"><path d="M6.5,0.5 V12.5 M0.5,6.5 H12.5" stroke="#444" stroke-width="1.6"/></svg>
<div class="a" style="left:66px;top:875px;width:166px;height:25px;background:#fff"></div>
<div class="a" style="left:67px;top:896px;width:164px;height:2.5px;background:#1b4fb5;border-radius:1px"></div>
<svg class="a" style="left:75.5px;top:878.5px" width="16" height="16" viewBox="0 0 16 16"><path d="M1,5 Q3,3.8 5,5 V13.5 Q3,14.7 1,13.5 Z" fill="#fff" stroke="#444" stroke-width="1"/><path d="M6,2 Q9,0.2 12,2 V13.5 Q9,15 6,13.5 Z" fill="#fff" stroke="#444" stroke-width="1"/><path d="M3,4.5 V14 M8.5,1.2 V14.5" stroke="#666" stroke-width="0.8"/></svg>
<div class="a" style="left:93.5px;top:880.84px;font-size:12px;line-height:12px;color:#333;white-space:nowrap;">Water Bottle</div>
<div class="a" style="left:233px;top:875px;width:168px;height:22px;background:#e8e8e8;border-radius:0 0 4px 4px;box-shadow:0 1px 1.5px rgba(0,0,0,0.18)"></div>
<svg class="a" style="left:242.5px;top:878.5px" width="16" height="16" viewBox="0 0 16 16"><rect x="0.8" y="1.5" width="14" height="12.5" fill="#fff" stroke="#444" stroke-width="1.1"/><path d="M8.5,14 V9.5 H14.8" fill="none" stroke="#444" stroke-width="1.1"/></svg>
<div class="a" style="left:260.5px;top:880.84px;font-size:12px;line-height:12px;color:#555;white-space:nowrap;">Water Bottle Drawing 1</div>
<div class="a" style="left:402px;top:875px;width:168px;height:22px;background:#e8e8e8;border-radius:0 0 4px 4px;box-shadow:0 1px 1.5px rgba(0,0,0,0.18)"></div>
<svg class="a" style="left:411.5px;top:878.5px" width="16" height="16" viewBox="0 0 16 16"><path d="M1,5 Q3,3.8 5,5 V13.5 Q3,14.7 1,13.5 Z" fill="#fff" stroke="#444" stroke-width="1"/><path d="M6,2 Q9,0.2 12,2 V13.5 Q9,15 6,13.5 Z" fill="#fff" stroke="#444" stroke-width="1"/><path d="M3,4.5 V14 M8.5,1.2 V14.5" stroke="#666" stroke-width="0.8"/></svg>
<div class="a" style="left:429.5px;top:880.84px;font-size:12px;line-height:12px;color:#555;white-space:nowrap;">Cage</div>
<div class="a" style="left:571px;top:875px;width:167px;height:22px;background:#e8e8e8;border-radius:0 0 4px 4px;box-shadow:0 1px 1.5px rgba(0,0,0,0.18)"></div>
<svg class="a" style="left:580.5px;top:878.5px" width="16" height="16" viewBox="0 0 16 16"><path d="M1,3 L4,1 H12 L15,3 V13 L12,15 H4 L1,13 Z" fill="#fff" stroke="#444" stroke-width="1"/><path d="M4,4 H12 V12 H4Z" fill="#777" stroke="#444" stroke-width="0.8"/><path d="M1,3 L4,4 M15,3 L12,4 M4,1 V4" stroke="#444" stroke-width="0.8"/></svg>
<div class="a" style="left:598.5px;top:880.84px;font-size:12px;line-height:12px;color:#555;white-space:nowrap;">Assembly 1</div>
<!--E:tabs-->

<!--S:dialog-->
<div class="a" style="left:217px;top:66px;width:183px;height:214px;background:#fff;box-shadow:0 3px 9px rgba(0,0,0,0.24)"></div>
<div class="a" style="left:222px;top:72.02px;font-size:11.2px;line-height:11.2px;color:#333;white-space:nowrap;">External thread 1</div>
<div class="a" style="left:217px;top:89px;width:183px;height:1px;background:#dedede"></div>
<div class="a" style="left:353px;top:66px;width:23.5px;height:23px;background:#009114"></div>
<svg class="a" style="left:357px;top:70px" width="16" height="15" viewBox="0 0 16 15"><path d="M2,7.5 L6,11.3 L13.5,3.5" fill="none" stroke="#fff" stroke-width="2.6"/></svg>
<svg class="a" style="left:382px;top:71px" width="12" height="12" viewBox="0 0 12 12"><path d="M1.5,1.5 L10.5,10.5 M10.5,1.5 L1.5,10.5" stroke="#c8283a" stroke-width="2.4"/></svg>
<div class="a" style="left:219px;top:94px;width:179px;height:37px;background:#ddeefa;border:1.5px solid #3f72c6;border-radius:3px"></div>
<div class="a" style="left:224.5px;top:99.72px;font-size:8.6px;line-height:8.6px;color:#666;white-space:nowrap;">Cylinder edges</div>
<div class="a" style="left:225px;top:114.52px;font-size:11.2px;line-height:11.2px;color:#444;white-space:nowrap;">Edge of Revolve 2</div>
<svg class="a" style="left:379px;top:116px" width="9" height="9" viewBox="0 0 9 9"><path d="M1,1 L8,8 M8,1 L1,8" stroke="#666" stroke-width="1.1"/></svg>
<div class="a" style="left:200px;top:139.0px;width:86px;text-align:right;font-size:9px;line-height:10px;color:#a8a8a8">Standard</div>
<div class="a" style="left:295px;top:138.57px;font-size:11.5px;line-height:11.5px;color:#333;white-space:nowrap;">ISO</div>
<div class="a" style="left:291px;top:152.6px;width:109px;height:1px;background:#dcdcdc"></div>
<svg class="a" style="left:388px;top:142.5px" width="8" height="5"><path d="M0,0 L7.5,0 L3.75,4 Z" fill="#333"/></svg>
<div class="a" style="left:200px;top:157.5px;width:86px;text-align:right;font-size:9px;line-height:10px;color:#a8a8a8">Size</div>
<div class="a" style="left:295px;top:157.07px;font-size:11.5px;line-height:11.5px;color:#333;white-space:nowrap;">M65</div>
<div class="a" style="left:291px;top:171.4px;width:109px;height:1px;background:#dcdcdc"></div>
<svg class="a" style="left:388px;top:161.0px" width="8" height="5"><path d="M0,0 L7.5,0 L3.75,4 Z" fill="#333"/></svg>
<div class="a" style="left:200px;top:175.8px;width:86px;text-align:right;font-size:9px;line-height:10px;color:#a8a8a8">Pitch</div>
<div class="a" style="left:295px;top:175.37px;font-size:11.5px;line-height:11.5px;color:#333;white-space:nowrap;">4 mm</div>
<div class="a" style="left:291px;top:189.6px;width:109px;height:1px;background:#dcdcdc"></div>
<svg class="a" style="left:388px;top:179.3px" width="8" height="5"><path d="M0,0 L7.5,0 L3.75,4 Z" fill="#333"/></svg>
<div class="a" style="left:222px;top:195.27px;font-size:11.5px;line-height:11.5px;color:#333;white-space:nowrap;">Up to next</div>
<div class="a" style="left:217px;top:211px;width:161px;height:1px;background:#dcdcdc"></div>
<svg class="a" style="left:366px;top:199px" width="8" height="5"><path d="M0,0 L7.5,0 L3.75,4 Z" fill="#333"/></svg>
<svg class="a" style="left:221px;top:220.0px" width="6" height="10" viewBox="0 0 6 10"><path d="M1,1 L5,5 L1,9" fill="none" stroke="#bbb" stroke-width="1.1"/></svg>
<div class="a" style="left:236.5px;top:220.0px;width:10px;height:10px;border:1px solid #c4c4c4;border-radius:2px;background:#fff"></div>
<div class="a" style="left:250px;top:219.52px;font-size:11.2px;line-height:11.2px;color:#444;white-space:nowrap;">Add chamfer</div>
<svg class="a" style="left:221px;top:243.0px" width="6" height="10" viewBox="0 0 6 10"><path d="M1,1 L5,5 L1,9" fill="none" stroke="#bbb" stroke-width="1.1"/></svg>
<div class="a" style="left:236.5px;top:243.0px;width:10px;height:10px;border:1px solid #c4c4c4;border-radius:2px;background:#fff"></div>
<div class="a" style="left:250px;top:242.52px;font-size:11.2px;line-height:11.2px;color:#444;white-space:nowrap;">Add undercut</div>
<div class="a" style="left:222px;top:270px;width:94px;height:1.3px;background:#555"></div>
<div class="a" style="left:282px;top:266px;width:10px;height:10px;border:1.2px solid #555;border-radius:50%;background:#fff"></div>
<svg class="a" style="left:385px;top:265px" width="11" height="11" viewBox="0 0 11 11"><circle cx="5.5" cy="5.5" r="5.2" fill="#9a9a9a"/><text x="5.5" y="9" font-size="8.5" font-weight="bold" fill="#fff" text-anchor="middle" font-family="Liberation Sans">?</text></svg>
<div class="a" style="left:204px;top:448px;width:28px;height:29px;background:#fff;border:1px solid #c4c4c4;border-left:none;border-radius:0 2px 2px 0"></div>
<svg class="a" style="left:209px;top:454px" width="18" height="18" viewBox="0 0 18 18"><path d="M3.5,2 L6,4.5 L8.5,2" fill="none" stroke="#333" stroke-width="1.1"/><path d="M6,5 V15" stroke="#444" stroke-width="1.2"/><path d="M8,2.2 H14 M7.5,6.3 H14 M7.5,10.3 H14 M7.5,14.3 H14" stroke="#444" stroke-width="1.3"/></svg>
<!--E:dialog-->
<!--S:cube-->
<svg class="a" style="left:1455px;top:70px" width="140" height="140" viewBox="1455 70 140 140">
<path d="M1525,76 L1530,84 L1520,84 Z" fill="#e0e6ed"/>
<path d="M1525,200 L1530,192 L1520,192 Z" fill="#e0e6ed"/>
<path d="M1463,138 L1471,132 L1471,144 Z" fill="#e0e6ed"/>
<path d="M1588,138 L1580,132 L1580,144 Z" fill="#e0e6ed"/>
<path d="M1507,83.5 Q1492,89 1482,99" fill="none" stroke="#e0e6ed" stroke-width="3.6"/>
<path d="M1476,104 L1479,95 L1486,101 Z" fill="#e0e6ed"/>
<path d="M1543,83.5 Q1558,89 1568,99" fill="none" stroke="#e0e6ed" stroke-width="3.6"/>
<path d="M1574,104 L1571,95 L1564,101 Z" fill="#e0e6ed"/>
<path d="M1494,119 L1519,104.5 L1556,115.5 L1557,153 L1533,171.5 L1493,159.5 Z" fill="#e0e6ed" stroke="#e0e6ed" stroke-width="6" stroke-linejoin="round"/>
<path d="M1505,119 L1520.5,107.5 L1546,114.5 L1534.5,126.5 Z" fill="#fff" stroke="#fff" stroke-width="5" stroke-linejoin="round"/>
<path d="M1498.5,133 L1527.5,138.5 L1528,165 L1498,159 Z" fill="#fff" stroke="#fff" stroke-width="5" stroke-linejoin="round"/>
<path d="M1539.5,136.5 L1553,126.5 L1552.5,154.5 L1539,164.5 Z" fill="#fff" stroke="#fff" stroke-width="4" stroke-linejoin="round"/>
<circle cx="1532" cy="134.5" r="5" fill="#fff"/>
<ellipse cx="1497.2" cy="125" rx="2.6" ry="4.6" fill="#fff" transform="rotate(20 1497.2 125)"/>
<ellipse cx="1532" cy="169.2" rx="5" ry="2.4" fill="#fff" transform="rotate(-10 1532 169.2)"/>
<path d="M1517,125 V133 M1529.5,147 L1537.5,148" stroke="#fff" stroke-width="1"/>
<path d="M1550,114 L1556,121" stroke="#fff" stroke-width="1"/>
<text x="0" y="0" font-family="Liberation Sans" font-size="7.5" font-style="italic" fill="#555" text-anchor="middle" transform="translate(1525.5,119) rotate(20)">Top</text>
<text x="0" y="0" font-family="Liberation Sans" font-size="10.5" fill="#333" text-anchor="middle" transform="translate(1512.5,153.5) rotate(12)">Front</text>
<text x="0" y="0" font-family="Liberation Sans" font-size="7.5" font-style="italic" fill="#555" text-anchor="middle" transform="translate(1549,144.5) rotate(-65)">Right</text>
<path d="M1490.5,123 V164.7" stroke="#2a2ae0" stroke-width="1.2"/>
<path d="M1490.5,164.7 L1533,177.1" stroke="#e03a3a" stroke-width="1.2"/>
<path d="M1490.5,164.7 L1514.3,143.8" stroke="#44b044" stroke-width="0.9"/>
<text x="1486.5" y="119.5" font-family="Liberation Sans" font-size="10.5" fill="#2a2ae0">Z</text>
<text x="1536.5" y="184.5" font-family="Liberation Sans" font-size="10.5" fill="#e03a3a">X</text>
<text x="1515" y="144" font-family="Liberation Sans" font-size="9.5" fill="#9cd090">Y</text>
<path d="M1556,188 L1562,185.5 L1569,188 V197 L1562,200.5 L1556,197.5 Z" fill="#aaa" stroke="#333" stroke-width="0.9" stroke-linejoin="round"/>
<path d="M1556,188 L1562,190.5 L1569,188 L1562,185.5Z" fill="#f2f2f2" stroke="#333" stroke-width="0.7"/>
<path d="M1562,190.5 V200.5 L1569,197 V188 Z" fill="#e2e2e2" stroke="#333" stroke-width="0.7"/>
<path d="M1577,192 L1583,192 L1580,195 Z" fill="#222"/>
</svg>
<div class="a" style="left:1573px;top:407px;width:27px;height:110px;background:#fff;border:1px solid #c8c8c8;border-right:none"></div>
<div class="a" style="left:1574px;top:434.5px;width:26px;height:1px;background:#c8c8c8"></div>
<div class="a" style="left:1574px;top:462px;width:26px;height:1px;background:#c8c8c8"></div>
<div class="a" style="left:1574px;top:489.5px;width:26px;height:1px;background:#c8c8c8"></div>
<svg class="a" style="left:1578px;top:413px" width="18" height="16" viewBox="0 0 18 16"><path d="M2,11 L8,2 L14,6 L11,11 Z" fill="#777"/><path d="M8,2 L14,6 L12,9" fill="#999"/><rect x="1" y="10" width="15.5" height="5" rx="2.5" fill="#fff" stroke="#555" stroke-width="1"/><circle cx="3.6" cy="12.5" r="1" fill="#555"/><path d="M10,10 V15" stroke="#999" stroke-width="1"/><rect x="11.5" y="10.5" width="4.5" height="4" fill="#ccc"/></svg>
<svg class="a" style="left:1578px;top:440px" width="18" height="17" viewBox="0 0 18 17"><path d="M6,8 L11,5.5 L16.5,8 V13.5 L11,16 L6,13.5 Z M6,8 L11,10.5 L16.5,8 M11,10.5 V16" fill="#fff" stroke="#333" stroke-width="1.1" stroke-linejoin="round"/><rect x="0.5" y="0.5" width="8" height="6" fill="#1f5bd6"/><path d="M0.5,2.5 H8.5 M0.5,4.5 H8.5 M3.2,0.5 V6.5 M5.8,0.5 V6.5" stroke="#fff" stroke-width="0.6"/></svg>
<svg class="a" style="left:1578px;top:467px" width="18" height="18" viewBox="0 0 18 18"><rect x="1" y="0.5" width="7" height="7" fill="#666"/><path d="M3.3,0.5 V7.5 M5.6,0.5 V7.5" stroke="#fff" stroke-width="0.6"/><path d="M6,9 L10,7 L14,9 V13 L10,15 L6,13 Z M6,9 L10,11 L14,9 M10,11 V15" fill="#fff" stroke="#444" stroke-width="1"/><path d="M3,8 Q1,12 3,16 M16,6 Q18,11 15,16" fill="none" stroke="#444" stroke-width="1"/></svg>
<svg class="a" style="left:1578px;top:494px" width="18" height="18" viewBox="0 0 18 18"><rect x="1" y="1" width="7" height="7" fill="none" stroke="#222" stroke-width="1.1"/><path d="M1,3.3 H8 M1,5.6 H8 M3.3,1 V8" stroke="#222" stroke-width="0.8"/><path d="M3,7 Q0.5,11.5 3,16.5 M14.5,7 Q17.5,11.5 14.5,16.5" fill="none" stroke="#222" stroke-width="1.5"/><path d="M6,9 L12,15 M12,9 Q8,11 6,16" fill="none" stroke="#222" stroke-width="1.8"/></svg>
<svg class="a" style="left:1575px;top:857px" width="18" height="13" viewBox="0 0 18 13"><path d="M1,11.5 V10.5 A8,8 0 0 1 17,10.5 V11.5 Z" fill="none" stroke="#333" stroke-width="1.4" stroke-linejoin="round"/><path d="M3.5,10 A5.5,5.5 0 0 1 14.5,10 Z" fill="none" stroke="#555" stroke-width="0.9"/><path d="M6,10 A3,3 0 0 1 12,10" fill="none" stroke="#333" stroke-width="1.2"/></svg>
<!--E:cube-->
<!--S:bottle-->
<svg class="a" style="left:0;top:0" width="1600" height="900" viewBox="0 0 1600 900">
<defs>
<linearGradient id="gb" gradientUnits="userSpaceOnUse" x1="776" y1="0" x2="1029" y2="0">
<stop offset="0" stop-color="#527c3f"/>
<stop offset="0.015" stop-color="#567f44"/>
<stop offset="0.2" stop-color="#557e43"/>
<stop offset="0.31" stop-color="#527c41"/>
<stop offset="0.376" stop-color="#5a8947"/>
<stop offset="0.5" stop-color="#67a04f"/>
<stop offset="0.63" stop-color="#71ac58"/>
<stop offset="0.75" stop-color="#7bb961"/>
<stop offset="0.88" stop-color="#83c466"/>
<stop offset="0.97" stop-color="#89cc6b"/>
<stop offset="1" stop-color="#86c869"/>
</linearGradient>
<linearGradient id="gcav" gradientUnits="userSpaceOnUse" x1="800" y1="0" x2="1005" y2="0">
<stop offset="0" stop-color="#86c466"/>
<stop offset="0.2" stop-color="#88c768"/>
<stop offset="0.55" stop-color="#66984d"/>
<stop offset="0.75" stop-color="#557f42"/>
<stop offset="1" stop-color="#517a3f"/>
</linearGradient>
<linearGradient id="gneck" gradientUnits="userSpaceOnUse" x1="791" y1="0" x2="1013" y2="0">
<stop offset="0" stop-color="#627f40"/>
<stop offset="0.35" stop-color="#6a8544"/>
<stop offset="0.55" stop-color="#8aa85c"/>
<stop offset="0.68" stop-color="#9cbb6b"/>
<stop offset="0.85" stop-color="#93bd63"/>
<stop offset="1" stop-color="#8fc062"/>
</linearGradient>
<linearGradient id="gledge" gradientUnits="userSpaceOnUse" x1="776" y1="0" x2="1029" y2="0">
<stop offset="0" stop-color="#88cc68"/>
<stop offset="0.5" stop-color="#90d46d"/>
<stop offset="1" stop-color="#a2e67c"/>
</linearGradient>
<radialGradient id="ghl" gradientUnits="userSpaceOnUse" cx="975" cy="405" r="90" fx="975" fy="405">
<stop offset="0" stop-color="#94dc74" stop-opacity="0.9"/>
<stop offset="1" stop-color="#94dc74" stop-opacity="0"/>
</radialGradient>
<radialGradient id="gdk" gradientUnits="userSpaceOnUse" cx="860" cy="395" r="70">
<stop offset="0" stop-color="#4a7238" stop-opacity="0.6"/>
<stop offset="1" stop-color="#4a7238" stop-opacity="0"/>
</radialGradient>
</defs>
<path d="M776.0,486 L776.0,737 C776.0,790 840,820 902.5,820 C965,820 1029.0,790 1029.0,737 L1029.0,486 Z" fill="url(#gb)"/>
<path d="M776.0,487 L776.0,737 C776.0,790 840,820 902.5,820 C965,820 1029.0,790 1029.0,737 L1029.0,487" stroke="#1c1c1c" stroke-width="1" fill="none"/>
<linearGradient id="gband" gradientUnits="userSpaceOnUse" x1="776" y1="0" x2="1029" y2="0"><stop offset="0" stop-color="#527d3f" stop-opacity="0.35"/><stop offset="0.45" stop-color="#527d3f" stop-opacity="0.75"/><stop offset="0.75" stop-color="#527d3f" stop-opacity="0.45"/><stop offset="1" stop-color="#527d3f" stop-opacity="0"/></linearGradient>
<path d="M776.0,737 C776.0,790 840,820 902.5,820 C965,820 1029.0,790 1029.0,737 A126.50,63.88 0 0 1 776.0,739 Z" fill="url(#gband)"/>
<clipPath id="ubc"><path d="M792,350 C781,355 779,414 776.0,487 L1029.0,487 C1026,414 1024,355 1013,350 Z"/></clipPath>
<filter id="bl12" x="-50%" y="-50%" width="200%" height="200%"><feGaussianBlur stdDeviation="12"/></filter>
<filter id="bl6" x="-50%" y="-50%" width="200%" height="200%"><feGaussianBlur stdDeviation="6"/></filter>
<path d="M792,350 C781,355 779,414 776.0,487 L1029.0,487 C1026,414 1024,355 1013,350 Z" fill="url(#gb)"/>
<g clip-path="url(#ubc)">
<clipPath id="belowg"><path d="M792,352 A110.94,56.02 0 1 0 1013,352 L1100,352 L1100,600 L700,600 L700,352 Z"/></clipPath>
<clipPath id="aboveg"><path d="M700,300 L1100,300 L1100,352 L1013,352 A110.94,56.02 0 1 1 792,352 L700,352 Z"/></clipPath>
<ellipse cx="797" cy="420" rx="18" ry="45" fill="#65a050" filter="url(#bl12)" opacity="0.8"/>
<g clip-path="url(#belowg)"><path d="M870,405 L950,400 L990,384 L1012,360 L1030,380 L1024,420 L965,430 L895,420 Z" fill="#98e07a" filter="url(#bl6)" opacity="0.95"/></g>
<ellipse cx="995" cy="450" rx="30" ry="35" fill="#8ad66e" filter="url(#bl12)" opacity="0.5"/>
<g clip-path="url(#aboveg)"><path d="M840,400 L902,418 L960,414 L1005,392 L1002,382 L950,398 L902,402 L845,390 Z" fill="#4a7039" filter="url(#bl6)" opacity="0.9"/></g>
</g>
<path d="M792,350 C781,355 779,414 776.0,487 M1029.0,487 C1026,414 1024,355 1013,350" stroke="#1c1c1c" stroke-width="1" fill="none"/>
<path d="M776.00,487.50 A126.50,63.88 0 0 0 1029.00,487.50" stroke="#1c1c1c" stroke-width="1" fill="none"/>
<path d="M776.00,739.00 A126.50,63.88 0 0 0 1029.00,739.00" stroke="#1c1c1c" stroke-width="1" fill="none"/>
<path d="M792.00,352.00 A110.94,56.02 0 1 0 1013.00,352.00" stroke="#1c1c1c" stroke-width="1" fill="none"/>
<path d="M776.0,209.1 L776.0,308 Q776.0,335 792,350 A119.34,60.27 0 0 0 1013,350 Q1029.0,335 1029.0,308 L1029.0,209.1 Z" fill="url(#gb)" stroke="#1c1c1c" stroke-width="1"/>
<path d="M780.00,330.25 A131.51,66.41 0 0 0 1025.00,330.25" stroke="#1c1c1c" stroke-width="1" fill="none"/>
<path d="M791.00,348.00 A128.77,65.03 0 0 0 1014.00,348.00" stroke="#1c1c1c" stroke-width="1" fill="none"/>
<path d="M776.00,213.10 A126.50,63.88 0 0 0 1029.00,213.10 Z" fill="url(#gledge)" stroke="#1c1c1c" stroke-width="1"/>
<path d="M776.00,209.10 A126.50,63.88 0 0 0 1029.00,209.10 A126.50,63.88 0 0 0 776.00,209.10 Z" fill="url(#gledge)" stroke="#1c1c1c" stroke-width="1"/>
<path d="M792.0,169 L792.0,202.7 A110.5,55.80 0 0 0 1013.0,202.7 L1013.0,169 Z" fill="url(#gneck)" stroke="#1c1c1c" stroke-width="1"/>
<path d="M789.50,204.90 A113.00,57.06 0 0 0 1015.50,204.90" stroke="#1c1c1c" stroke-width="1" fill="none"/>
<path d="M792.00,169.00 A110.50,56.00 0 0 0 1013.00,169.00 A110.50,56.00 0 0 0 792.00,169.00 Z" fill="#8fd46c"/>
<path d="M801.50,169.00 A101.00,51.00 0 0 0 1003.50,169.00 A101.00,51.00 0 0 0 801.50,169.00 Z" fill="url(#gcav)" stroke="#1c1c1c" stroke-width="1"/>
<clipPath id="cav"><path d="M801.50,169.00 A101.00,51.00 0 0 0 1003.50,169.00 A101.00,51.00 0 0 0 801.50,169.00 Z"/></clipPath>
<g clip-path="url(#cav)"><path d="M807.50,201.60 A95.00,48.00 0 0 0 997.50,201.60 A95.00,48.00 0 0 0 807.50,201.60 Z" stroke="#1c1c1c" stroke-width="1" fill="none"/><path d="M808.50,207.40 A94.00,47.50 0 0 0 996.50,207.40 A94.00,47.50 0 0 0 808.50,207.40 Z" stroke="#1c1c1c" stroke-width="1" fill="none"/></g>
<path d="M792.00,169.00 A110.50,56.00 0 0 0 1013.00,169.00 A110.50,56.00 0 0 0 792.00,169.00 Z" stroke="#f0a010" stroke-width="3.2" fill="none"/>
</svg>
<!--E:bottle-->

</body></html>
